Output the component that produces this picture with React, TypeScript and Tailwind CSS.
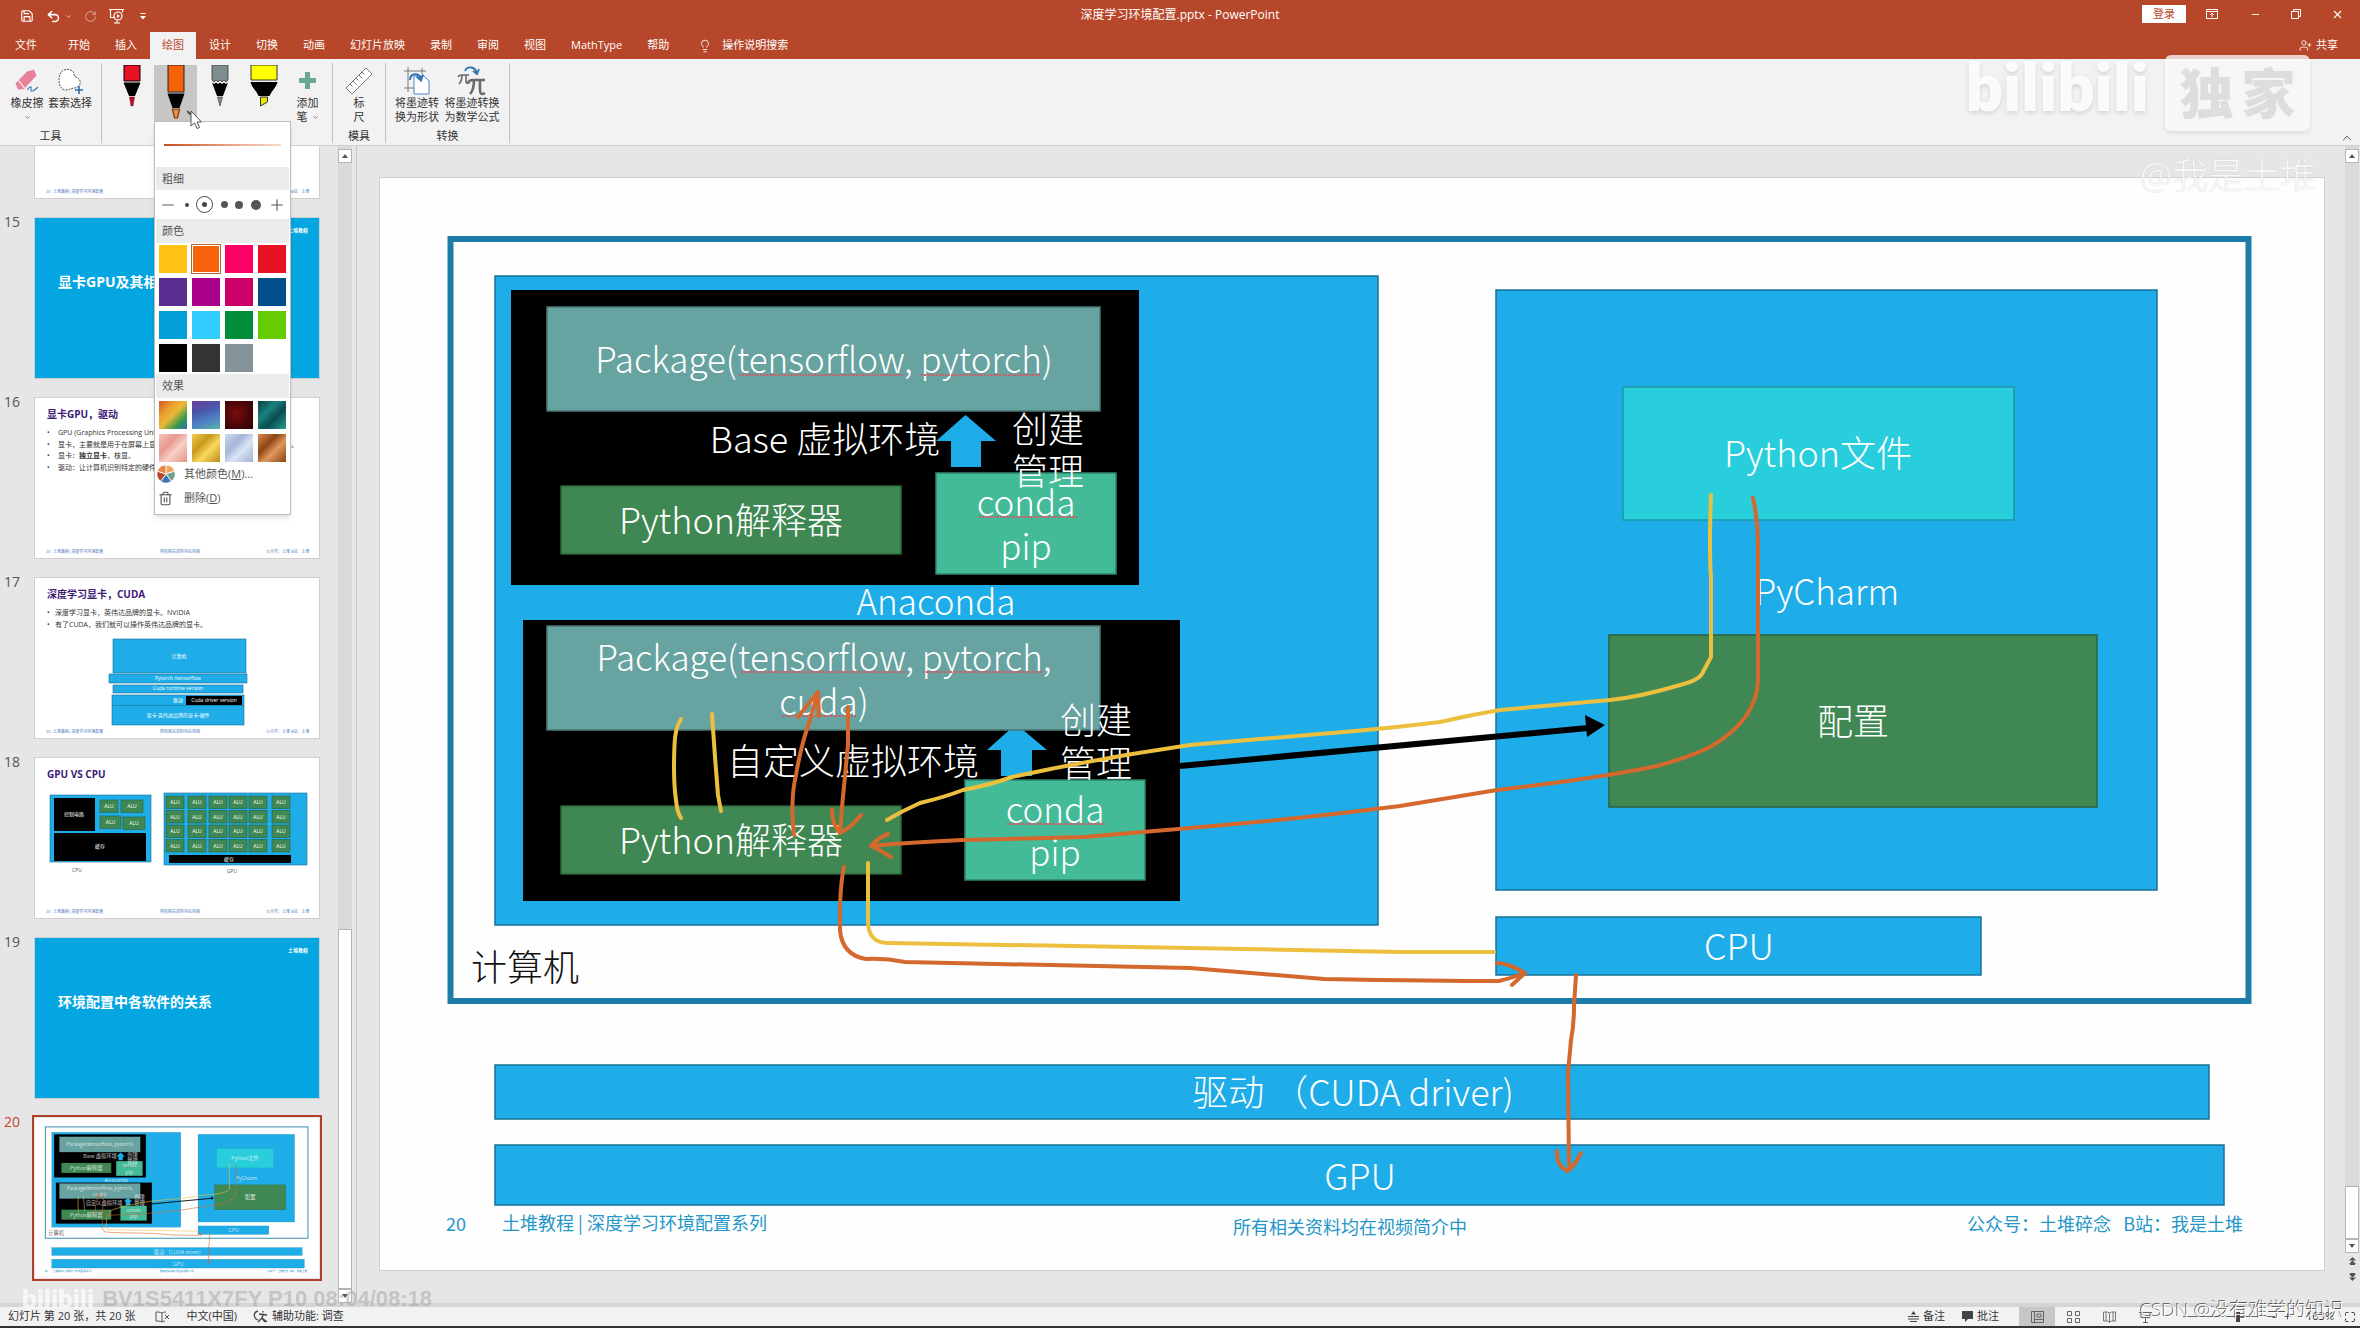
import type { ReactNode } from "react";
import {
  ChevronDown,
  ChevronUp,
  Lightbulb,
  Maximize,
  Minus,
  Plus,
  RotateCw,
  Save,
  Trash2,
  Undo2,
  UserPlus,
  X,
} from "lucide-react";

const TABS = [
  "文件",
  "开始",
  "插入",
  "绘图",
  "设计",
  "切换",
  "动画",
  "幻灯片放映",
  "录制",
  "审阅",
  "视图",
  "MathType",
  "帮助",
];

const COLORS = [
  { name: "金色", bg: "bg-[#ffc114]" },
  { name: "橙色", bg: "bg-[#f6630c]" },
  { name: "粉色", bg: "bg-[#ff0066]" },
  { name: "红色", bg: "bg-[#e71224]" },
  { name: "紫色", bg: "bg-[#5b2d90]" },
  { name: "紫红", bg: "bg-[#ab008b]" },
  { name: "玫红", bg: "bg-[#cc0066]" },
  { name: "深蓝", bg: "bg-[#004f8b]" },
  { name: "蓝色", bg: "bg-[#00a0d7]" },
  { name: "浅蓝", bg: "bg-[#33ccff]" },
  { name: "绿色", bg: "bg-[#008c3a]" },
  { name: "浅绿", bg: "bg-[#66cc00]" },
  { name: "黑色", bg: "bg-black" },
  { name: "深灰", bg: "bg-[#333333]" },
  { name: "灰色", bg: "bg-[#849398]" },
  { name: "白色", bg: "bg-white" },
];

const EFFECTS = [
  { name: "彩虹", bg: "bg-[linear-gradient(135deg,#d8552c_0%,#e8a02c_30%,#eab838_50%,#3c9a48_75%,#2a6fae_100%)]" },
  { name: "银河", bg: "bg-[linear-gradient(160deg,#6a3f98_0%,#4a56a8_35%,#4f7fc4_65%,#58b4a8_100%)]" },
  { name: "岩浆", bg: "bg-[radial-gradient(circle_at_40%_45%,#7c0d10_0%,#56070a_40%,#2a0305_100%)]" },
  { name: "海洋", bg: "bg-[linear-gradient(135deg,#0a3e40_0%,#1a8380_35%,#0a4c50_60%,#2b9a94_100%)]" },
  { name: "玫瑰金", bg: "bg-[linear-gradient(135deg,#f5c4b8_0%,#e89a90_35%,#f7cfc6_60%,#e39488_100%)]" },
  { name: "金箔", bg: "bg-[linear-gradient(135deg,#f2cd4a_0%,#c9971c_35%,#f6d95c_60%,#bd8a18_100%)]" },
  { name: "银箔", bg: "bg-[linear-gradient(135deg,#cfdaf0_0%,#a5b6d8_35%,#dbe4f5_60%,#9fb0d2_100%)]" },
  { name: "青铜", bg: "bg-[linear-gradient(135deg,#d88a4c_0%,#8f4416_35%,#e0985c_60%,#8a4013_100%)]" },
];

/* ---------- title bar + tabs ---------- */

const SlideShowIcon = () => (
  <svg width="15" height="16" viewBox="0 0 15 16" fill="none" stroke="currentColor" strokeWidth="1.2">
    <path d="M0 1.5h15M1.5 1.5v8h4M13.5 1.5v3M5 15h6M8 12.5V15" />
    <circle cx="9" cy="8" r="4" />
    <path d="M8 6v4l3-2z" fill="currentColor" stroke="none" />
  </svg>
);

const TitleBar = () => (
  <div className="grid h-8 grid-cols-[1fr_auto_1fr] items-start text-white">
    <div className="flex h-8 items-center gap-2 pl-5">
      <button aria-label="保存">
        <Save size={14} />
      </button>
      <button aria-label="撤消" className="ml-1 flex items-center gap-1">
        <Undo2 size={15} strokeWidth={2.5} />
        <ChevronDown size={7} />
      </button>
      <button aria-label="重复" className="ml-1 opacity-40">
        <RotateCw size={13} />
      </button>
      <button aria-label="从头开始" className="ml-1">
        <SlideShowIcon />
      </button>
      <button aria-label="自定义快速访问工具栏" className="ml-2">
        <svg width="6" height="7" viewBox="0 0 6 7" fill="currentColor">
          <path d="M0.5 0h5v1h-5zM0 3h6L3 6.5z" />
        </svg>
      </button>
    </div>
    <h1 className="pt-2 text-xs leading-[14px]">深度学习环境配置.pptx - PowerPoint</h1>
    <div className="flex h-7 items-center justify-end pr-4">
      <button className="mr-5 h-[18px] w-11 bg-white text-[11px] leading-[18px] text-[#b7472a]">登录</button>
      <button aria-label="功能区显示选项" className="mr-8">
        <svg width="12" height="10" viewBox="0 0 12 10" fill="none" stroke="currentColor">
          <path d="M0.5 0.5h11v9H0.5zM0.5 2.5h11M6 8V4.5M4 6l2-2 2 2" />
        </svg>
      </button>
      <button aria-label="最小化" className="mr-[30px]">
        <Minus size={11} strokeWidth={2} />
      </button>
      <button aria-label="向下还原" className="mr-[30px]">
        <svg width="10" height="10" viewBox="0 0 10 10" fill="none" stroke="currentColor">
          <path d="M0.5 2.5h7v7h-7zM2.5 2.5v-2h7v7h-2" />
        </svg>
      </button>
      <button aria-label="关闭">
        <X size={13} strokeWidth={2} />
      </button>
    </div>
  </div>
);

const TabBar = () => (
  <div className="flex h-[27px] items-stretch text-[11px] text-white">
    <nav className="flex pl-[3px]">
      {TABS.map((tab) => (
        <button
          key={tab}
          className={`px-3 first:mr-[7px] mr-px ${tab === "绘图" ? "bg-[#f3f2f2] text-[#b7472a]" : ""}`}
        >
          {tab}
        </button>
      ))}
    </nav>
    <button className="ml-4 flex items-center gap-2.5">
      <Lightbulb size={14} strokeWidth={1.5} />
      操作说明搜索
    </button>
    <button className="ml-auto flex items-center gap-1 pr-[22px]">
      <UserPlus size={13} strokeWidth={1.5} />
      共享
    </button>
  </div>
);

/* ---------- ribbon ---------- */

interface GroupProps {
  label?: string;
  className: string;
  children: ReactNode;
}

const RibbonGroup = ({ label, className, children }: GroupProps) => (
  <div className={`mt-1 mb-[2px] flex flex-col justify-between border-r border-[#c4c2c2] ${className}`}>
    <div className="flex items-start pt-[2px] pl-2">{children}</div>
    {label && <div className="text-center leading-[14px]">{label}</div>}
  </div>
);

interface ToolProps {
  icon: ReactNode;
  lines: string[];
  className: string;
  chevron?: "below" | "inline";
}

const RibbonTool = ({ icon, lines, className, chevron }: ToolProps) => (
  <button className={`flex flex-col items-center leading-[14px] ${className}`}>
    <span className="flex h-[31px] items-center justify-center">{icon}</span>
    {lines.map((line, i) => (
      <span key={line} className="flex items-center gap-1 whitespace-nowrap">
        {line}
        {chevron === "inline" && i === lines.length - 1 && <ChevronDown size={7} />}
      </span>
    ))}
    {chevron === "below" && <ChevronDown size={7} className="mt-1" />}
  </button>
);

const EraserIcon = () => (
  <svg width="26" height="26" viewBox="0 0 26 26">
    <path d="M13 3.5 L20 1.5 L22.5 7.5 L10 21 L4 21.5 L1.5 15.5 Z" fill="#e8829a" />
    <path d="M4.500 12.500 L10.500 20" stroke="#fff" strokeWidth="1.2" />
    <path d="M13 22c3-4 5-4 4-1s2 3 7-2" fill="none" stroke="#4a86c5" strokeWidth="1.2" />
  </svg>
);

const LassoIcon = () => (
  <svg width="26" height="26" viewBox="0 0 26 26" fill="none">
    <path
      d="M9 1.500C4 2 2 7 2 12s2 10 7 10c4 0 5-2 9-2 4-1 6-4 5-7-1-4-6-3-6-7 0-3-4-5-8-4.500z"
      fill="#fff"
      stroke="#555"
      strokeDasharray="2 1"
    />
    <path d="M22 18v8M18 22h8" stroke="#2b6cb0" strokeWidth="1.6" />
  </svg>
);

const RulerIcon = () => (
  <svg width="28" height="28" viewBox="0 0 28 28" fill="#fff" stroke="#777">
    <path d="M1 21 21 1l6 6L7 27z" />
    <path d="M5 17l2.500 2.500M8 14l3.500 3.500M11 11l2.500 2.500M14 8l3.500 3.500M17 5l2.500 2.500" />
  </svg>
);

const InkToShapeIcon = () => (
  <svg width="26" height="28" viewBox="0 0 26 28" fill="none">
    <path d="M4 0v25M0 4h22M18 1v6M0 21h10" stroke="#777" />
    <path d="M10 9h10l5 5v13H10z" fill="#fff" stroke="#4a86c5" />
    <path d="M6 13c0-7 9-8 11-1M12.500 9.500l4.500 4 2-6" stroke="#2f75b5" strokeWidth="2" />
  </svg>
);

const InkToMathIcon = () => (
  <svg width="30" height="30" viewBox="0 0 30 30" fill="none" stroke="#6b6b6b">
    <path d="M1 11c1-2 2-2 4-2h7M5 9c0 4-1 7-3 9M9 9v6c0 2 1 3 3 2" strokeWidth="1.6" />
    <path d="M11 17c1-3 3-3 5-3h12M17 14c0 6-1 11-4 14M23 14v10c0 4 2 5 5 3" strokeWidth="2.600" />
    <path d="M8 5c2-5 10-5 12 2M16 5l4 3 2-5" stroke="#2f75b5" strokeWidth="1.800" />
  </svg>
);

const RedPen = () => (
  <svg width="18" height="56" viewBox="0 0 18 56">
    <path d="M1 0h16v16H1z" fill="#e71224" stroke="#000" />
    <path d="M0.500 17.500h17L12 31H6z" fill="#000" />
    <path d="M6.500 32h5L10 41H8z" fill="#b5122a" stroke="#7a0c18" strokeWidth="0.500" />
  </svg>
);

const OrangePen = () => (
  <svg width="18" height="56" viewBox="0 0 18 56">
    <path d="M1 0h16v27H1z" fill="#f6630c" stroke="#222" />
    <path d="M0.500 28.500h17L12.500 43h-7z" fill="#000" />
    <path d="M5.500 44h7L10.500 53h-3z" fill="#f08a4c" stroke="#7a3410" strokeWidth="1.200" />
  </svg>
);

const PencilPen = () => (
  <svg width="18" height="56" viewBox="0 0 18 56">
    <path d="M1 0h16v15l-2 2-2-2-2 2-2-2-2 2-2-2-2 2-2-2z" fill="#7d8c8f" stroke="#333" strokeWidth="0.800" />
    <path d="M1 17.500l2 1.500 2-1.500 2 1.500 2-1.500 2 1.500 2-1.500 2 1.500 2-1.500L12 31H6z" fill="#000" />
    <path d="M6.500 32h5L9 41z" fill="#888" stroke="#333" strokeWidth="0.600" />
  </svg>
);

const HighlighterPen = () => (
  <svg width="28" height="56" viewBox="0 0 28 56">
    <path d="M1 0h26v15H1z" fill="#ffff00" stroke="#333" />
    <path d="M0.500 17h27c-1 5-6 9-8 14h-11c-2-5-7-9-8-14z" fill="#000" />
    <path d="M10.500 32h7v5l-7 4z" fill="#e5e500" stroke="#333" />
  </svg>
);

const PenMenu = () => (
  <div className="absolute top-full left-0 z-20 w-[137px] border border-[#bdbdbd] bg-white px-px pb-1 text-[11px] text-[#555] shadow-md">
    <div className="flex h-[45px] items-center px-2">
      <div className="h-[2px] w-full bg-linear-to-r from-[#c8501a] to-[#f7dccd]" />
    </div>
    <div className="h-[23px] bg-[#ebebeb] px-1.5 leading-[23px]">粗细</div>
    <div className="flex h-[29px] items-center justify-between px-[3px]">
      <button aria-label="更细">
        <Minus size={18} strokeWidth={1.5} />
      </button>
      <button aria-label="0.25 毫米" className="size-1 rounded-full bg-[#444]" />
      <button
        aria-label="0.35 毫米"
        className="flex size-[17px] items-center justify-center rounded-full border border-[#444]"
      >
        <span className="size-[5px] rounded-full bg-[#444]" />
      </button>
      <button aria-label="0.5 毫米" className="size-[7px] rounded-full bg-[#555]" />
      <button aria-label="1 毫米" className="size-2 rounded-full bg-[#555]" />
      <button aria-label="2 毫米" className="size-[10px] rounded-full bg-[#555]" />
      <button aria-label="更粗">
        <Plus size={18} strokeWidth={1.5} />
      </button>
    </div>
    <div className="h-6 bg-[#ebebeb] px-1.5 leading-6">颜色</div>
    <div className="grid grid-cols-[repeat(4,28px)] justify-center gap-[5px] py-[2px]">
      {COLORS.map((c) => (
        <button
          key={c.name}
          aria-label={c.name}
          className={`h-7 ${c.bg} ${c.name === "橙色" ? "border border-white outline outline-[#b5653a]" : ""}`}
        />
      ))}
    </div>
    <div className="h-6 bg-[#ebebeb] px-1.5 leading-6">效果</div>
    <div className="grid grid-cols-[repeat(4,28px)] justify-center gap-[5px] pt-[3px]">
      {EFFECTS.map((e) => (
        <button key={e.name} aria-label={e.name} className={`h-7 ${e.bg}`} />
      ))}
    </div>
    <button className="flex h-6 w-full items-center gap-[9px] px-px">
      <svg width="18" height="18" viewBox="-9 -9 18 18" stroke="#fff" strokeWidth="0.8">
        <path d="M0 0V-9A9 9 0 0 1 8.600-2.800z" fill="#f0a45c" />
        <path d="M0 0L8.600-2.800A9 9 0 0 1 5.300 7.300z" fill="#6fa287" />
        <path d="M0 0L5.300 7.300A9 9 0 0 1-5.300 7.300z" fill="#3f78b5" />
        <path d="M0 0L-5.300 7.300A9 9 0 0 1-8.600-2.800z" fill="#b5482e" />
        <path d="M0 0L-8.600-2.800A9 9 0 0 1 0-9z" fill="#e8854a" />
      </svg>
      <span>
        其他颜色(<u>M</u>)...
      </span>
    </button>
    <button className="flex h-6 w-full items-center gap-[11px] px-[2px]">
      <Trash2 size={15} strokeWidth={1.8} />
      <span>
        删除(<u>D</u>)
      </span>
    </button>
  </div>
);

const Ribbon = () => (
  <div className="flex h-[87px] border-b border-[#d2d0d0] bg-[#f3f2f2] text-[11px] text-[#333]">
    <RibbonGroup label="工具" className="w-[102px]">
      <RibbonTool icon={<EraserIcon />} lines={["橡皮擦"]} className="w-[38px]" chevron="below" />
      <RibbonTool icon={<LassoIcon />} lines={["套索选择"]} className="w-12" />
    </RibbonGroup>
    <RibbonGroup className="w-[231px]">
      <div className="flex items-start gap-px">
        <button aria-label="笔: 红色" className="flex h-14 w-[43px] justify-center">
          <RedPen />
        </button>
        <div className="relative">
          <button aria-label="笔: 橙色" className="flex h-14 w-[43px] justify-center bg-[#c8c5c5]">
            <OrangePen />
          </button>
          <PenMenu />
          <svg
            className="absolute top-[45px] left-[33px] z-30"
            width="16"
            height="20"
            viewBox="0 0 16 20"
            fill="none"
          >
            <path d="M0 1l3 3 2-2" stroke="#333" strokeWidth="1.500" />
            <path d="M4 1v15l3.500-3 2.500 5.500 2.500-1-2.500-5.500h4.500z" fill="#fff" stroke="#555" />
          </svg>
        </div>
        <button aria-label="铅笔: 灰色" className="flex h-14 w-[43px] justify-center">
          <PencilPen />
        </button>
        <button aria-label="荧光笔: 黄色" className="flex h-14 w-[43px] justify-center">
          <HighlighterPen />
        </button>
        <RibbonTool
          icon={
            <svg width="17" height="17" viewBox="0 0 17 17" fill="#6aa88f">
              <path d="M6 0h5v6h6v5h-6v6H6v-6H0V6h6z" />
            </svg>
          }
          lines={["添加", "笔"]}
          className="w-[43px]"
          chevron="inline"
        />
      </div>
    </RibbonGroup>
    <RibbonGroup label="模具" className="w-[53px]">
      <RibbonTool icon={<RulerIcon />} lines={["标", "尺"]} className="w-9" />
    </RibbonGroup>
    <RibbonGroup label="转换" className="w-[124px]">
      <RibbonTool icon={<InkToShapeIcon />} lines={["将墨迹转", "换为形状"]} className="w-[46px]" />
      <RibbonTool icon={<InkToMathIcon />} lines={["将墨迹转换", "为数学公式"]} className="ml-[3px] w-[58px]" />
    </RibbonGroup>
    <button aria-label="折叠功能区" className="mt-auto ml-auto pr-1.5">
      <ChevronUp size={14} strokeWidth={1.5} />
    </button>
  </div>
);

/* ---------- slide 20: software stack diagram ---------- */

interface BoxProps {
  x: number;
  y: number;
  w: number;
  h: number;
  fill: string;
  stroke?: string;
}

const Box = ({ x, y, w, h, fill, stroke = "#1a7097" }: BoxProps) => (
  <rect x={x} y={y} width={w} height={h} fill={fill} stroke={stroke} strokeWidth="1.500" />
);

const Spell = ({ x1, x2, y }: { x1: number; x2: number; y: number }) => (
  <line x1={x1} x2={x2} y1={y} y2={y} stroke="#c9626a" strokeWidth="2" strokeDasharray="2 1" />
);

const BLUE = "#1eade8";
const TEAL = "#67a3a0";
const GREEN = "#3f8853";
const MINT = "#43ba98";

const StackDiagram = ({ className }: { className?: string }) => (
  <svg
    className={className}
    viewBox="380 178 1944 1092"
    fontFamily="'Noto Sans CJK SC', sans-serif"
    fontSize="36"
    fontWeight="300"
    textAnchor="middle"
    fill="#fff"
  >
    <rect x="380" y="178" width="1944" height="1092" fill="#fefefe" />
    <rect x="450.500" y="239" width="1798" height="762" fill="#fefefe" stroke="#1c7ea8" strokeWidth="6" />

    <Box x={495} y={276} w={883} h={649} fill={BLUE} />
    <rect x="511" y="290" width="628" height="295" fill="#000" />
    <Box x={547} y={307} w={553} h={104} fill={TEAL} stroke="#4a7876" />
    <text x="824" y="373" fontSize="35">Package(tensorflow, pytorch)</text>
    <Spell x1={739} x2={903} y={375} />
    <Spell x1={921} x2={1041} y={375} />
    <text x="825" y="453">Base 虚拟环境</text>
    <path d="M965.500 415l30.500 26h-15v26h-30v-26h-15z" fill={BLUE} />
    <Box x={561} y={486} w={340} h={68} fill={GREEN} stroke="#2d623c" />
    <text x="731" y="534">Python解释器</text>
    <Box x={936} y={473} w={180} h={101} fill={MINT} stroke="#30866d" />
    <text x="1048" y="443">创建</text>
    <text x="1048" y="485">管理</text>
    <text x="1026" y="516" fontSize="35">conda</text>
    <Spell x1={979} x2={1077} y={517} />
    <text x="1026" y="560" fontSize="35">pip</text>
    <text x="936" y="615" fontSize="35">Anaconda</text>

    <rect x="523" y="620" width="657" height="281" fill="#000" />
    <path d="M1016 724l31 26h-15v26h-31v-26h-14z" fill={BLUE} />
    <Box x={547} y={626} w={553} h={104} fill={TEAL} stroke="#4a7876" />
    <text x="824" y="671" fontSize="35">Package(tensorflow, pytorch,</text>
    <Spell x1={741} x2={905} y={672} />
    <Spell x1={923} x2={1043} y={672} />
    <text x="824" y="715" fontSize="35">cuda)</text>
    <Spell x1={782} x2={857} y={716} />
    <text x="853" y="775">自定义虚拟环境</text>
    <Box x={561} y={806} w={340} h={68} fill={GREEN} stroke="#2d623c" />
    <text x="731" y="854">Python解释器</text>
    <Box x={965} y={780} w={180} h={100} fill={MINT} stroke="#30866d" />
    <text x="1096" y="734">创建</text>
    <text x="1096" y="777">管理</text>
    <text x="1055" y="823" fontSize="35">conda</text>
    <Spell x1={1007} x2={1105} y={824} />
    <text x="1055" y="866" fontSize="35">pip</text>
    <text x="525" y="981" fill="#111">计算机</text>

    <Box x={1496} y={290} w={661} h={600} fill={BLUE} />
    <Box x={1623} y={387} w={391} h={133} fill="#28cedc" stroke="#1c97a4" />
    <text x="1818" y="467">Python文件</text>
    <text x="1827" y="605" fontSize="35">PyCharm</text>
    <Box x={1609} y={635} w={488} h={172} fill={GREEN} stroke="#2d623c" />
    <text x="1853" y="735">配置</text>
    <Box x={1496} y={917} w={485} h={58} fill={BLUE} />
    <text x="1739" y="960">CPU</text>

    <Box x={495} y={1065} w={1714} h={54} fill={BLUE} />
    <text x="1353" y="1106">驱动 （CUDA driver)</text>
    <Box x={495} y={1145} w={1729} h={60} fill={BLUE} />
    <text x="1360" y="1190">GPU</text>

    <g fill="#2496c8" fontSize="18" fontWeight="400">
      <text x="456" y="1231">20</text>
      <text x="502" y="1230" textAnchor="start">
        土堆教程 | 深度学习环境配置系列
      </text>
      <text x="1350" y="1234">所有相关资料均在视频简介中</text>
      <text x="2243" y="1231" textAnchor="end" xmlSpace="preserve">
        公众号：土堆碎念   B站：我是土堆
      </text>
    </g>

    <path d="M1180 766L1588 728" stroke="#000" strokeWidth="6" />
    <path d="M1605 725l-20-10 2 22z" fill="#000" />

    {/* ink strokes */}
    <g fill="none" strokeWidth="4" strokeLinecap="round" strokeLinejoin="round">
      <g stroke="#edbf3f">
        <path d="M681 719Q675 728 674.500 745Q673 780 676 800Q677 812 681 818" />
        <path d="M712 714L715 757L718 795L721 811" />
        <path d="M887 820Q902 811 920 803Q945 797 963 790Q990 785 1012 777Q1100 758 1190 745Q1270 738 1355 731Q1400 727 1440 722Q1470 715 1500 710L1610 700Q1640 697 1680 685Q1700 680 1703 672L1711 657V577Q1709 550 1711 495" />
        <path d="M868 863V923Q869 943 888 943Q1050 946 1190 948L1400 952L1494 952" />
      </g>
      <g stroke="#d5682c">
        <path d="M794 835Q790 800 796 775Q801 745 810 720L818 692M798 717L818 692L819 716" />
        <path d="M848 707L848 745L842 807L840 833M832 809Q832 825 840 833Q851 828 861 815" />
        <path d="M1753 498Q1758 520 1758 544V680Q1757 720 1710 747Q1690 757 1657 766Q1600 778 1497 790L1400 806Q1290 820 1190 828L1084 837L963 840Q900 843 871 846M888 834Q879 837 871 846Q880 850 891 857" />
        <path d="M844 867Q841 880 840 905V930Q842 955 866 959Q885 958 905 962L1190 968L1324 979Q1440 981 1499 981Q1512 978 1525 973M1497 963Q1508 963 1525 973L1512 985" />
        <path d="M1576 975L1574 1006Q1574 1025 1571 1040L1568 1073L1569 1166M1557 1151Q1556 1165 1567 1171Q1573 1169 1581 1153" />
      </g>
    </g>
  </svg>
);

/* ---------- thumbnails ---------- */

const ThumbFooter = () => (
  <g fill="#4a78c0" fontSize="4">
    <text x="11" y="155">20</text>
    <text x="18" y="155">土堆教程|深度学习环境配置</text>
    <text x="125" y="155">所有相关资料均在视频</text>
    <text x="231" y="155">公众号：土堆 B站：土堆</text>
  </g>
);

const ThumbSvg = ({ bg = "#fff", children }: { bg?: string; children?: ReactNode }) => (
  <svg
    className="w-full"
    viewBox="0 0 284 160"
    fontFamily="'Open Sans', 'Noto Sans CJK SC', sans-serif"
  >
    <rect width="284" height="160" fill={bg} />
    {children}
  </svg>
);

const SectionThumb = ({ title }: { title: string }) => (
  <ThumbSvg bg="#04a6e2">
    <text x="23" y="69" fill="#fff" fontSize="14" fontWeight="700">
      {title}
    </text>
    <text x="253" y="14" fill="#fff" fontSize="5" fontWeight="700">
      土堆教程
    </text>
  </ThumbSvg>
);

const GpuTextThumb = () => (
  <ThumbSvg>
    <text x="12" y="20" fill="#3d1a78" fontSize="10" fontWeight="700">
      显卡GPU，驱动
    </text>
    <g fill="#333" fontSize="7">
      <text x="12" y="37">•</text>
      <text x="23" y="37">GPU (Graphics Processing Unit)</text>
      <text x="12" y="49">•</text>
      <text x="23" y="49">显卡，主要就是用于在屏幕上显示，</text>
      <text x="12" y="60">•</text>
      <text x="23" y="60">
        显卡：<tspan fontWeight="700">独立显卡</tspan>，核显。
      </text>
      <text x="12" y="72">•</text>
      <text x="23" y="72">驱动：让计算机识别特定的硬件</text>
      <text x="256" y="49">。</text>
    </g>
    <ThumbFooter />
  </ThumbSvg>
);

const CudaThumb = () => (
  <ThumbSvg>
    <text x="12" y="20" fill="#3d1a78" fontSize="10" fontWeight="700">
      深度学习显卡，CUDA
    </text>
    <g fill="#333" fontSize="7">
      <text x="12" y="37">•</text>
      <text x="20" y="37">深度学习显卡，英伟达品牌的显卡。NVIDIA</text>
      <text x="12" y="49">•</text>
      <text x="20" y="49">有了CUDA，我们就可以操作英伟达品牌的显卡。</text>
    </g>
    <g fill={BLUE} stroke="#1a7097" strokeWidth="0.600">
      <rect x="78" y="61" width="133" height="34" />
      <rect x="74" y="96" width="138" height="9" />
      <rect x="78" y="107" width="130" height="8" />
      <rect x="77" y="117" width="132" height="30" />
      <path d="M77 127.500h132" />
    </g>
    <rect x="151" y="118" width="56" height="9" fill="#000" />
    <g fill="#fff" fontSize="5" textAnchor="middle">
      <text x="144" y="80">计算机</text>
      <text x="143" y="102">Pytorch /tensorflow</text>
      <text x="143" y="112">Cuda runtime version</text>
      <text x="143" y="124">驱动</text>
      <text x="179" y="124">Cuda driver version</text>
      <text x="143" y="139">显卡-英伟达品牌的显卡-硬件</text>
    </g>
    <ThumbFooter />
  </ThumbSvg>
);

const Alu = ({ x, y, w = 18 }: { x: number; y: number; w?: number }) => (
  <g>
    <rect x={x} y={y} width={w} height="12.500" fill={GREEN} stroke="#2d623c" strokeWidth="0.600" />
    <text x={x + w / 2} y={y + 8} fill="#fff" fontSize="5" textAnchor="middle">
      ALU
    </text>
  </g>
);

const GpuVsCpuThumb = () => (
  <ThumbSvg>
    <text x="12" y="20" fill="#3d1a78" fontSize="10" fontWeight="700">
      GPU VS CPU
    </text>
    <g fill={BLUE} stroke="#1a7097" strokeWidth="0.600">
      <rect x="15" y="37" width="101" height="67" />
      <rect x="129" y="35" width="143" height="72" />
    </g>
    <rect x="19" y="40" width="41" height="33" />
    <rect x="19" y="75" width="92" height="28" />
    <rect x="134" y="97" width="122" height="8" />
    <Alu x={65} y={42} />
    <Alu x={86} y={42} w={22} />
    <Alu x={65} y={58} w={21} />
    <Alu x={88} y={59} w={22} />
    {[38, 52.5, 67, 81.5].map((y) => [131, 153, 174, 194, 214, 237].map((x) => <Alu key={`${x}-${y}`} x={x} y={y} />))}
    <g fill="#fff" fontSize="5" textAnchor="middle">
      <text x="39" y="58">控制电路</text>
      <text x="65" y="90">缓存</text>
      <text x="194" y="103">缓存</text>
    </g>
    <g fill="#555" fontSize="5" textAnchor="middle">
      <text x="42" y="114">CPU</text>
      <text x="197" y="115">GPU</text>
    </g>
    <ThumbFooter />
  </ThumbSvg>
);

// slide 14 is scrolled almost out of view, so its number is left out
const SLIDES = [
  {
    no: 14,
    hideNo: true,
    thumb: (
      <ThumbSvg>
        <ThumbFooter />
      </ThumbSvg>
    ),
  },
  { no: 15, thumb: <SectionThumb title="显卡GPU及其相关概念" /> },
  { no: 16, thumb: <GpuTextThumb /> },
  { no: 17, thumb: <CudaThumb /> },
  { no: 18, thumb: <GpuVsCpuThumb /> },
  { no: 19, thumb: <SectionThumb title="环境配置中各软件的关系" /> },
  { no: 20, thumb: <StackDiagram className="w-full" /> },
];

const ScrollArrow = ({ up }: { up?: boolean }) => (
  <button
    aria-label={up ? "向上滚动" : "向下滚动"}
    className="flex h-[14px] w-full items-center justify-center border border-[#b5b5b5] bg-white"
  >
    <svg width="6" height="4" viewBox="0 0 6 4" fill="#555">
      <path d={up ? "M3 0l3 4H0z" : "M0 0h6L3 4z"} />
    </svg>
  </button>
);

const SlidePanel = () => (
  <aside className="flex w-[357px] shrink-0 border-r border-[#c9c7c9]">
    <ol className="flex flex-1 flex-col justify-end gap-5 overflow-hidden pr-[19px] pb-[25px]">
      {SLIDES.map(({ no, hideNo, thumb }) => (
        <li key={no} className="flex items-start">
          <span className={`w-[35px] pl-1 text-sm leading-2 ${no === 20 ? "text-[#c8432b]" : "text-[#555]"}`}>
            {!hideNo && no}
          </span>
          <button
            aria-label={`幻灯片 ${no}`}
            className={`flex-1 outline ${
              no === 20 ? "outline-2 outline-offset-1 outline-[#b0402c]" : "outline-1 outline-[#cfcfcf]"
            }`}
          >
            {thumb}
          </button>
        </li>
      ))}
    </ol>
    <div className="mr-1 flex w-[14px] flex-col bg-[#dadada] pt-[3px]">
      <ScrollArrow up />
      <div className="mt-auto h-[360px] border border-[#b5b5b5] bg-white" />
      <ScrollArrow />
    </div>
  </aside>
);

const DoubleArrow = ({ up }: { up?: boolean }) => (
  <button aria-label={up ? "上一张幻灯片" : "下一张幻灯片"} className="flex h-4 w-full items-center justify-center">
    <svg width="7" height="8" viewBox="0 0 7 8" fill="#555" className={up ? "" : "rotate-180"}>
      <path d="M3.500 0L7 3.500H0zM3.500 3.500L7 7H0zM1 7h5v1H1z" />
    </svg>
  </button>
);

const SlideEditor = () => (
  <main className="flex min-w-0 flex-1">
    <div className="flex flex-1 items-center pr-[21px] pb-[2px] pl-[23px]">
      <StackDiagram className="w-full outline outline-[#d0d0d0]" />
    </div>
    <div className="mr-px flex w-[14px] flex-col bg-[#dadada] pt-[3px]">
      <ScrollArrow up />
      <div className="mt-auto h-[53px] border border-[#b5b5b5] bg-white" />
      <ScrollArrow />
      <div className="bg-[#e6e6e6] pb-[18px]">
        <DoubleArrow up />
        <DoubleArrow />
      </div>
    </div>
  </main>
);

/* ---------- status bar ---------- */

const StatusBar = () => (
  <footer className="flex h-[25px] items-stretch border-t-4 border-b-2 border-t-[#d6d5d6] border-b-[#333] bg-[#f3f2f2] text-[11px] text-[#333]">
    <div className="flex items-center pl-2">
      <span>幻灯片 第 20 张，共 20 张</span>
      <button aria-label="拼写检查" className="ml-5">
        <svg width="15" height="12" viewBox="0 0 15 12" fill="none" stroke="#555">
          <path d="M7 2v9M7 2C5 1 3 1 1 1v9c2 0 4 0 6 1 1-.5 2-1 3-1M7 2c1-.6 2-1 4-1M10 4l4 4M14 4l-4 4" />
        </svg>
      </button>
      <button className="ml-4">中文(中国)</button>
      <button className="ml-4 flex items-center gap-1">
        <svg width="15" height="13" viewBox="0 0 15 13" fill="none" stroke="#444" strokeWidth="1.300">
          <path d="M5 1C1 2 0 6 3 9l2 1M6 4l8 1M10 5l-1 3-4 4M9 8l3 4M9 8l5 4M10 1v1.500" />
        </svg>
        辅助功能: 调查
      </button>
    </div>
    <div className="ml-auto flex items-stretch pr-1">
      <button className="mr-4 flex items-center gap-1">
        <svg width="11" height="11" viewBox="0 0 11 11" fill="none" stroke="#444">
          <path d="M0 5.500h11M0 8h11M2 10.500h7" />
          <path d="M5.500 0L8 3.500H3z" fill="#444" stroke="none" />
        </svg>
        备注
      </button>
      <button className="mr-5 flex items-center gap-[3px]">
        <svg width="13" height="11" viewBox="0 0 13 11" fill="#444">
          <path d="M1 0h11v8H7l-3 3V8H1z" />
        </svg>
        批注
      </button>
      <button aria-label="普通视图" className="flex w-9 items-center justify-center bg-[#c8c6c6]">
        <svg width="13" height="12" viewBox="0 0 13 12" fill="none" stroke="#666">
          <path d="M0.500 0.500h12v11H0.500zM3.500 0.500v11M3.500 8.500h9M6 3h4v3H6z" />
        </svg>
      </button>
      <button aria-label="幻灯片浏览" className="flex w-9 items-center justify-center">
        <svg width="13" height="12" viewBox="0 0 13 12" fill="none" stroke="#666">
          <path d="M0.500 0.500h4v4h-4zM8.500 0.500h4v4h-4zM0.500 7.500h4v4h-4zM8.500 7.500h4v4h-4z" />
        </svg>
      </button>
      <button aria-label="阅读视图" className="flex w-9 items-center justify-center">
        <svg width="13" height="12" viewBox="0 0 13 12" fill="none" stroke="#777">
          <path d="M6.500 2v9.500M0.500 1h4l2 1 2-1h4v9h-4l-2 1-2-1h-4zM3 1v9M10 1v9" />
        </svg>
      </button>
      <button aria-label="幻灯片放映" className="flex w-9 items-center justify-center">
        <svg width="13" height="12" viewBox="0 0 13 12" fill="none" stroke="#666">
          <path d="M0 1.500h13M2 1.500v5h9v-5M6.500 6.500V11M4 11.500h5" />
        </svg>
      </button>
      <input
        type="range"
        aria-label="显示比例"
        min="10"
        max="400"
        defaultValue="245"
        className="mr-2 ml-5 h-px w-[92px] appearance-none self-center bg-[#666] [&::-webkit-slider-thumb]:h-[10px] [&::-webkit-slider-thumb]:w-1 [&::-webkit-slider-thumb]:appearance-none [&::-webkit-slider-thumb]:bg-[#444]"
      />
      <button aria-label="放大">
        <Plus size={9} />
      </button>
      <button className="ml-3 w-8">163%</button>
      <button aria-label="适应窗口大小" className="ml-2">
        <Maximize size={12} />
      </button>
    </div>
  </footer>
);

/* ---------- watermarks ---------- */

const Watermarks = () => (
  <div className="pointer-events-none">
    <div className="absolute top-[47px] right-[50px] z-40 flex items-center gap-4 text-white/85">
      <span className="font-[Roboto] text-[66px] leading-[80px] font-black drop-shadow-[0_2px_2px_rgba(0,0,0,0.15)]">
        bilibili
      </span>
      <span className="mt-2 flex h-[76px] w-[145px] items-center justify-center gap-2 rounded-md bg-white/75 text-[54px] font-black text-[#dedcde] drop-shadow-[0_2px_2px_rgba(0,0,0,0.12)]">
        <span>独</span>
        <span>家</span>
      </span>
    </div>
    <span className="absolute top-[154px] right-[44px] z-40 text-[36px] leading-[44px] font-light text-white/90 [text-shadow:0_0_1px_#bbb]">
      @我是土堆
    </span>
    <div className="absolute bottom-4 left-[22px] z-40 flex items-center gap-2 font-[Liberation_Sans] text-[22px] leading-[26px] font-bold text-[#9a9a9a]/45">
      <span className="font-[Roboto] text-[26px] font-black text-white/70">bilibili</span>
      <span>BV1S5411X7FY P10 08:04/08:18</span>
    </div>
    <span className="absolute right-4 bottom-[6px] z-40 text-[19px] leading-6 font-light text-white [text-shadow:-1px_-1px_0_#555]">
      CSDN @没有难学的知识
    </span>
  </div>
);

const App = () => {
  return (
    <div className="relative flex h-screen flex-col overflow-hidden bg-[#e6e6e6] font-['Open_Sans','Noto_Sans_CJK_SC',sans-serif]">
      <header className="relative z-10">
        <div className="bg-[#b7472a]">
          <TitleBar />
          <TabBar />
        </div>
        <Ribbon />
      </header>
      <div className="flex min-h-0 flex-1">
        <SlidePanel />
        <SlideEditor />
      </div>
      <StatusBar />
      <Watermarks />
    </div>
  );
};

export default App;
